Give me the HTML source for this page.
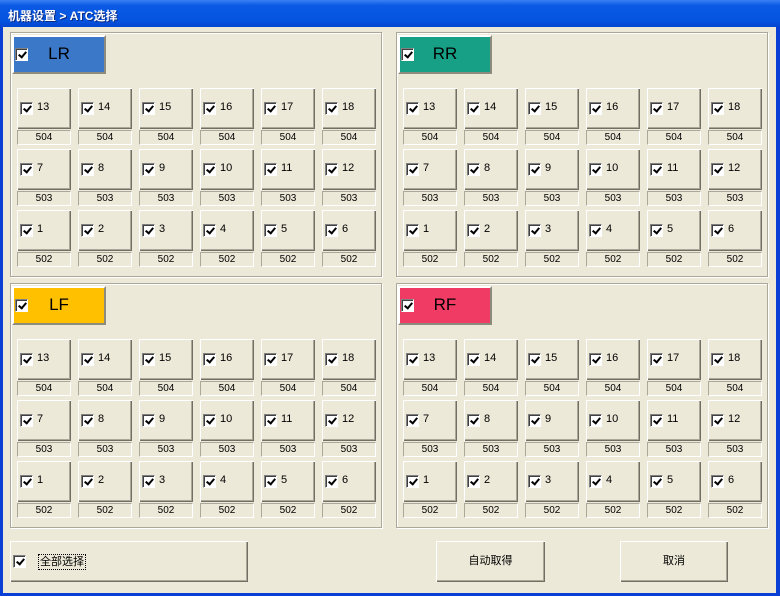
<!DOCTYPE html>
<html><head><meta charset="utf-8"><style>
*{margin:0;padding:0;box-sizing:border-box}
body{width:780px;height:596px;background:#0a3fd6;position:relative;overflow:hidden;font-family:"Liberation Sans","Noto Sans CJK SC",sans-serif}
.title{position:absolute;left:0;top:0;width:780px;height:27px;background:linear-gradient(#3a80f4,#0a5ae4 20%,#0454e0 75%,#0346d0);color:#fff;font:bold 12px "Liberation Sans","Noto Sans CJK SC",sans-serif;padding:7px 0 0 8px;text-shadow:1px 1px #0a2a80}
.win{position:absolute;left:3px;top:27px;width:773px;height:566px;background:#ece9d8}
.g{position:absolute;width:372px;height:245px;border:1px solid #aca899;box-shadow:inset 1px 1px #fff,1px 1px #fff}
.h{position:absolute;left:1px;top:2px;width:94px;height:39px;border:2px solid;border-color:#fff #8d8b7e #8d8b7e #fff;font-size:17px;text-align:center;line-height:34px;color:#000}
.h .cb{position:absolute;left:1px;top:11px}
.c{position:absolute;width:54px;height:41px;background:#ece9d8;box-shadow:inset 1px 1px #fff,inset -1px -1px #716f64,inset -2px -2px #aca899;font-size:11px}
.c .cb{position:absolute;left:3px;top:14px}
.c span{position:absolute;left:20px;top:13px}
.l{position:absolute;width:54px;height:15px;border:1px solid;border-color:#aca899 #fff #fff #aca899;font-size:10px;text-align:center;line-height:13px}
.cb{width:13px;height:13px;background:#fff;border:1px solid;border-color:#808080 #fff #fff #808080;box-shadow:inset 1px 1px #404040;display:inline-block;position:relative}
.cb:after{content:"";position:absolute;left:4px;top:1px;width:3px;height:6px;border:solid #000;border-width:0 2px 2px 0;transform:rotate(40deg)}
.b{position:absolute;height:41px;box-shadow:inset 1px 1px #fff,inset -1px -1px #716f64,inset -2px -2px #aca899;font-size:11px;text-align:center;line-height:41px}
</style></head><body>
<div class="title">机器设置 &gt; ATC选择</div>
<div class="win"></div>

<div class="g" style="left:10px;top:32px">
<div class="h" style="background:#3c78c8"><i class="cb"></i>LR</div>
<div class="c" style="left:6px;top:55px"><i class="cb"></i><span>13</span></div><div class="l" style="left:6px;top:97px">504</div>
<div class="c" style="left:67px;top:55px"><i class="cb"></i><span>14</span></div><div class="l" style="left:67px;top:97px">504</div>
<div class="c" style="left:128px;top:55px"><i class="cb"></i><span>15</span></div><div class="l" style="left:128px;top:97px">504</div>
<div class="c" style="left:189px;top:55px"><i class="cb"></i><span>16</span></div><div class="l" style="left:189px;top:97px">504</div>
<div class="c" style="left:250px;top:55px"><i class="cb"></i><span>17</span></div><div class="l" style="left:250px;top:97px">504</div>
<div class="c" style="left:311px;top:55px"><i class="cb"></i><span>18</span></div><div class="l" style="left:311px;top:97px">504</div>
<div class="c" style="left:6px;top:116px"><i class="cb"></i><span>7</span></div><div class="l" style="left:6px;top:158px">503</div>
<div class="c" style="left:67px;top:116px"><i class="cb"></i><span>8</span></div><div class="l" style="left:67px;top:158px">503</div>
<div class="c" style="left:128px;top:116px"><i class="cb"></i><span>9</span></div><div class="l" style="left:128px;top:158px">503</div>
<div class="c" style="left:189px;top:116px"><i class="cb"></i><span>10</span></div><div class="l" style="left:189px;top:158px">503</div>
<div class="c" style="left:250px;top:116px"><i class="cb"></i><span>11</span></div><div class="l" style="left:250px;top:158px">503</div>
<div class="c" style="left:311px;top:116px"><i class="cb"></i><span>12</span></div><div class="l" style="left:311px;top:158px">503</div>
<div class="c" style="left:6px;top:177px"><i class="cb"></i><span>1</span></div><div class="l" style="left:6px;top:219px">502</div>
<div class="c" style="left:67px;top:177px"><i class="cb"></i><span>2</span></div><div class="l" style="left:67px;top:219px">502</div>
<div class="c" style="left:128px;top:177px"><i class="cb"></i><span>3</span></div><div class="l" style="left:128px;top:219px">502</div>
<div class="c" style="left:189px;top:177px"><i class="cb"></i><span>4</span></div><div class="l" style="left:189px;top:219px">502</div>
<div class="c" style="left:250px;top:177px"><i class="cb"></i><span>5</span></div><div class="l" style="left:250px;top:219px">502</div>
<div class="c" style="left:311px;top:177px"><i class="cb"></i><span>6</span></div><div class="l" style="left:311px;top:219px">502</div>
</div>

<div class="g" style="left:396px;top:32px">
<div class="h" style="background:#17a085"><i class="cb"></i>RR</div>
<div class="c" style="left:6px;top:55px"><i class="cb"></i><span>13</span></div><div class="l" style="left:6px;top:97px">504</div>
<div class="c" style="left:67px;top:55px"><i class="cb"></i><span>14</span></div><div class="l" style="left:67px;top:97px">504</div>
<div class="c" style="left:128px;top:55px"><i class="cb"></i><span>15</span></div><div class="l" style="left:128px;top:97px">504</div>
<div class="c" style="left:189px;top:55px"><i class="cb"></i><span>16</span></div><div class="l" style="left:189px;top:97px">504</div>
<div class="c" style="left:250px;top:55px"><i class="cb"></i><span>17</span></div><div class="l" style="left:250px;top:97px">504</div>
<div class="c" style="left:311px;top:55px"><i class="cb"></i><span>18</span></div><div class="l" style="left:311px;top:97px">504</div>
<div class="c" style="left:6px;top:116px"><i class="cb"></i><span>7</span></div><div class="l" style="left:6px;top:158px">503</div>
<div class="c" style="left:67px;top:116px"><i class="cb"></i><span>8</span></div><div class="l" style="left:67px;top:158px">503</div>
<div class="c" style="left:128px;top:116px"><i class="cb"></i><span>9</span></div><div class="l" style="left:128px;top:158px">503</div>
<div class="c" style="left:189px;top:116px"><i class="cb"></i><span>10</span></div><div class="l" style="left:189px;top:158px">503</div>
<div class="c" style="left:250px;top:116px"><i class="cb"></i><span>11</span></div><div class="l" style="left:250px;top:158px">503</div>
<div class="c" style="left:311px;top:116px"><i class="cb"></i><span>12</span></div><div class="l" style="left:311px;top:158px">503</div>
<div class="c" style="left:6px;top:177px"><i class="cb"></i><span>1</span></div><div class="l" style="left:6px;top:219px">502</div>
<div class="c" style="left:67px;top:177px"><i class="cb"></i><span>2</span></div><div class="l" style="left:67px;top:219px">502</div>
<div class="c" style="left:128px;top:177px"><i class="cb"></i><span>3</span></div><div class="l" style="left:128px;top:219px">502</div>
<div class="c" style="left:189px;top:177px"><i class="cb"></i><span>4</span></div><div class="l" style="left:189px;top:219px">502</div>
<div class="c" style="left:250px;top:177px"><i class="cb"></i><span>5</span></div><div class="l" style="left:250px;top:219px">502</div>
<div class="c" style="left:311px;top:177px"><i class="cb"></i><span>6</span></div><div class="l" style="left:311px;top:219px">502</div>
</div>

<div class="g" style="left:10px;top:283px">
<div class="h" style="background:#ffc000"><i class="cb"></i>LF</div>
<div class="c" style="left:6px;top:55px"><i class="cb"></i><span>13</span></div><div class="l" style="left:6px;top:97px">504</div>
<div class="c" style="left:67px;top:55px"><i class="cb"></i><span>14</span></div><div class="l" style="left:67px;top:97px">504</div>
<div class="c" style="left:128px;top:55px"><i class="cb"></i><span>15</span></div><div class="l" style="left:128px;top:97px">504</div>
<div class="c" style="left:189px;top:55px"><i class="cb"></i><span>16</span></div><div class="l" style="left:189px;top:97px">504</div>
<div class="c" style="left:250px;top:55px"><i class="cb"></i><span>17</span></div><div class="l" style="left:250px;top:97px">504</div>
<div class="c" style="left:311px;top:55px"><i class="cb"></i><span>18</span></div><div class="l" style="left:311px;top:97px">504</div>
<div class="c" style="left:6px;top:116px"><i class="cb"></i><span>7</span></div><div class="l" style="left:6px;top:158px">503</div>
<div class="c" style="left:67px;top:116px"><i class="cb"></i><span>8</span></div><div class="l" style="left:67px;top:158px">503</div>
<div class="c" style="left:128px;top:116px"><i class="cb"></i><span>9</span></div><div class="l" style="left:128px;top:158px">503</div>
<div class="c" style="left:189px;top:116px"><i class="cb"></i><span>10</span></div><div class="l" style="left:189px;top:158px">503</div>
<div class="c" style="left:250px;top:116px"><i class="cb"></i><span>11</span></div><div class="l" style="left:250px;top:158px">503</div>
<div class="c" style="left:311px;top:116px"><i class="cb"></i><span>12</span></div><div class="l" style="left:311px;top:158px">503</div>
<div class="c" style="left:6px;top:177px"><i class="cb"></i><span>1</span></div><div class="l" style="left:6px;top:219px">502</div>
<div class="c" style="left:67px;top:177px"><i class="cb"></i><span>2</span></div><div class="l" style="left:67px;top:219px">502</div>
<div class="c" style="left:128px;top:177px"><i class="cb"></i><span>3</span></div><div class="l" style="left:128px;top:219px">502</div>
<div class="c" style="left:189px;top:177px"><i class="cb"></i><span>4</span></div><div class="l" style="left:189px;top:219px">502</div>
<div class="c" style="left:250px;top:177px"><i class="cb"></i><span>5</span></div><div class="l" style="left:250px;top:219px">502</div>
<div class="c" style="left:311px;top:177px"><i class="cb"></i><span>6</span></div><div class="l" style="left:311px;top:219px">502</div>
</div>

<div class="g" style="left:396px;top:283px">
<div class="h" style="background:#f03c64"><i class="cb"></i>RF</div>
<div class="c" style="left:6px;top:55px"><i class="cb"></i><span>13</span></div><div class="l" style="left:6px;top:97px">504</div>
<div class="c" style="left:67px;top:55px"><i class="cb"></i><span>14</span></div><div class="l" style="left:67px;top:97px">504</div>
<div class="c" style="left:128px;top:55px"><i class="cb"></i><span>15</span></div><div class="l" style="left:128px;top:97px">504</div>
<div class="c" style="left:189px;top:55px"><i class="cb"></i><span>16</span></div><div class="l" style="left:189px;top:97px">504</div>
<div class="c" style="left:250px;top:55px"><i class="cb"></i><span>17</span></div><div class="l" style="left:250px;top:97px">504</div>
<div class="c" style="left:311px;top:55px"><i class="cb"></i><span>18</span></div><div class="l" style="left:311px;top:97px">504</div>
<div class="c" style="left:6px;top:116px"><i class="cb"></i><span>7</span></div><div class="l" style="left:6px;top:158px">503</div>
<div class="c" style="left:67px;top:116px"><i class="cb"></i><span>8</span></div><div class="l" style="left:67px;top:158px">503</div>
<div class="c" style="left:128px;top:116px"><i class="cb"></i><span>9</span></div><div class="l" style="left:128px;top:158px">503</div>
<div class="c" style="left:189px;top:116px"><i class="cb"></i><span>10</span></div><div class="l" style="left:189px;top:158px">503</div>
<div class="c" style="left:250px;top:116px"><i class="cb"></i><span>11</span></div><div class="l" style="left:250px;top:158px">503</div>
<div class="c" style="left:311px;top:116px"><i class="cb"></i><span>12</span></div><div class="l" style="left:311px;top:158px">503</div>
<div class="c" style="left:6px;top:177px"><i class="cb"></i><span>1</span></div><div class="l" style="left:6px;top:219px">502</div>
<div class="c" style="left:67px;top:177px"><i class="cb"></i><span>2</span></div><div class="l" style="left:67px;top:219px">502</div>
<div class="c" style="left:128px;top:177px"><i class="cb"></i><span>3</span></div><div class="l" style="left:128px;top:219px">502</div>
<div class="c" style="left:189px;top:177px"><i class="cb"></i><span>4</span></div><div class="l" style="left:189px;top:219px">502</div>
<div class="c" style="left:250px;top:177px"><i class="cb"></i><span>5</span></div><div class="l" style="left:250px;top:219px">502</div>
<div class="c" style="left:311px;top:177px"><i class="cb"></i><span>6</span></div><div class="l" style="left:311px;top:219px">502</div>
</div>

<div class="b" style="left:10px;top:541px;width:238px;text-align:left"><i class="cb" style="position:absolute;left:3px;top:14px"></i><span style="position:absolute;left:28px;top:13px;line-height:14px;border:1px dotted #000;padding:0 1px">全部选择</span></div>
<div class="b" style="left:436px;top:541px;width:109px">自动取得</div>
<div class="b" style="left:620px;top:541px;width:108px">取消</div>
</body></html>
